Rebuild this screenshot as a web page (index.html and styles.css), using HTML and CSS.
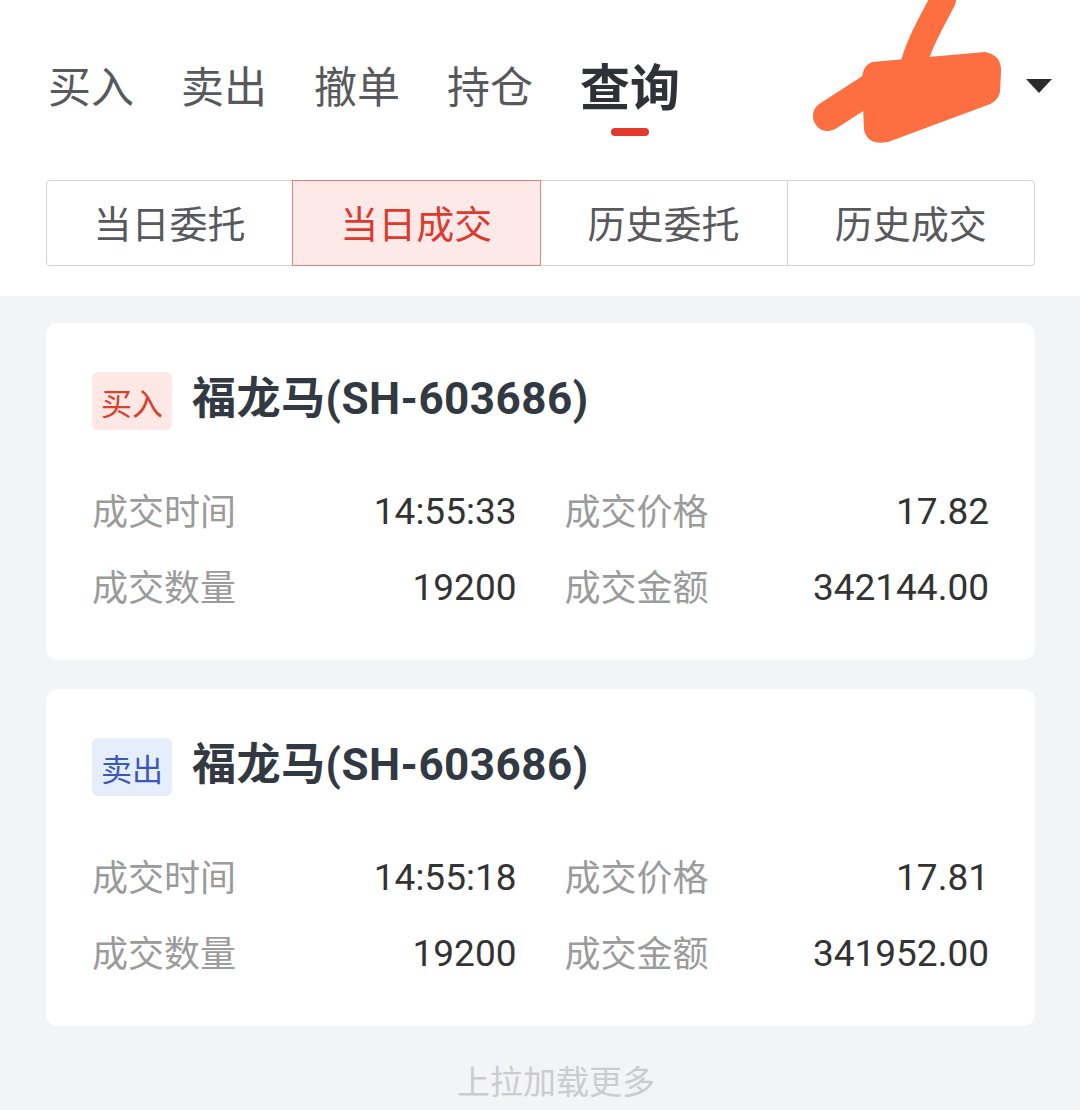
FILE: index.html
```html
<!DOCTYPE html>
<html lang="zh">
<head>
<meta charset="utf-8">
<link rel="stylesheet" href="styles.css">
</head>
<body>
<div class="header">
  <div class="tabs">
    <div class="tab">买入</div>
    <div class="tab">卖出</div>
    <div class="tab">撤单</div>
    <div class="tab">持仓</div>
    <div class="tab active">查询</div>
  </div>
  <div class="account">
    <span class="caret"></span>
    <svg class="scribble" width="280" height="160" viewBox="800 0 280 160">
      <path d="M943 0 C930 25 918 45 912 70" stroke="#fd6f40" stroke-width="26" fill="none" stroke-linecap="round"/>
      <path d="M828 116 L890 76" stroke="#fd6f40" stroke-width="30" fill="none" stroke-linecap="round"/>
      <path d="M872 62 L985 52 Q1002 55 1001 72 L1000 92 Q998 102 985 106 L888 142 Q868 146 864 130 L862 80 Q862 66 872 62 Z" fill="#fd6f40"/>
    </svg>
  </div>
  <div class="segments">
    <div class="seg">当日委托</div>
    <div class="seg on">当日成交</div>
    <div class="seg">历史委托</div>
    <div class="seg">历史成交</div>
  </div>
</div>

<div class="card">
  <div class="card-head">
    <span class="badge buy">买入</span>
    <span class="title">福龙马(SH-603686)</span>
  </div>
  <div class="grid">
    <div class="cell"><span class="lbl">成交时间</span><span class="val">14:55:33</span></div>
    <div class="cell"><span class="lbl">成交价格</span><span class="val">17.82</span></div>
    <div class="cell"><span class="lbl">成交数量</span><span class="val">19200</span></div>
    <div class="cell"><span class="lbl">成交金额</span><span class="val">342144.00</span></div>
  </div>
</div>

<div class="card">
  <div class="card-head">
    <span class="badge sell">卖出</span>
    <span class="title">福龙马(SH-603686)</span>
  </div>
  <div class="grid">
    <div class="cell"><span class="lbl">成交时间</span><span class="val">14:55:18</span></div>
    <div class="cell"><span class="lbl">成交价格</span><span class="val">17.81</span></div>
    <div class="cell"><span class="lbl">成交数量</span><span class="val">19200</span></div>
    <div class="cell"><span class="lbl">成交金额</span><span class="val">341952.00</span></div>
  </div>
</div>

<div class="more">上拉加载更多</div>
</body>
</html>
```

FILE: styles.css
```css
* { box-sizing: border-box; }
html, body {
  margin: 0;
  padding: 0;
}
body {
  width: 1080px;
  height: 1110px;
  overflow: hidden;
  background: #f3f4f6;
  font-family: "Noto Sans CJK SC", "Noto Sans", sans-serif;
  color: #333;
}
.header {
  position: relative;
  background: #fff;
  padding-bottom: 30px;
}
.tabs {
  display: flex;
  align-items: flex-start;
  gap: 47px;
  height: 180px;
  padding: 57px 0 0 48px;
}
.tab {
  display: flex;
  flex-direction: column;
  align-items: center;
  font-size: 43px;
  line-height: 54px;
  color: #58595c;
}
.tab.active {
  font-size: 50px;
  font-weight: 700;
  color: #2e3138;
}
.tab.active::after {
  content: "";
  width: 38px;
  height: 8px;
  margin-top: 17px;
  border-radius: 4px;
  background: #e5392f;
}
.account {
  position: absolute;
  top: 0;
  right: 0;
  width: 280px;
  height: 160px;
}
.caret {
  position: absolute;
  right: 28px;
  top: 79px;
  width: 0;
  height: 0;
  border-left: 13px solid transparent;
  border-right: 13px solid transparent;
  border-top: 14px solid #2b2b2b;
}
.scribble {
  position: absolute;
  left: 0;
  top: 0;
}
.segments {
  display: grid;
  grid-template-columns: repeat(4, 1fr);
  margin: 0 45px 0 46px;
  height: 86px;
}
.seg {
  display: flex;
  align-items: center;
  justify-content: center;
  font-size: 38px;
  color: #58595c;
  border: 1px solid #d4d4d6;
  margin-left: -1px;
  padding-bottom: 3px;
}
.seg:first-child {
  margin-left: 0;
  border-radius: 4px 0 0 4px;
}
.seg:last-child {
  border-radius: 0 4px 4px 0;
}
.seg.on {
  position: relative;
  background: #fdeae8;
  border-color: #ea7f77;
  color: #dc3a2f;
}
.card {
  background: #fff;
  border-radius: 12px;
  margin: 27px 45px 0 46px;
  padding: 49px 46px 35px;
}
.card + .card {
  margin-top: 29px;
}
.card-head {
  display: flex;
  align-items: center;
  gap: 20px;
  height: 58px;
}
.badge {
  display: flex;
  align-items: center;
  justify-content: center;
  width: 80px;
  height: 58px;
  border-radius: 6px;
  font-size: 31px;
}
.badge.buy { background: #fde8e6; color: #d9412f; }
.badge.sell { background: #e6edfb; color: #3a5ab8; }
.title {
  font-family: Roboto, "Noto Sans CJK SC", sans-serif;
  font-size: 44px;
  line-height: 1;
  font-weight: 700;
  color: #333942;
  letter-spacing: 0.5px;
  margin-top: -4px;
}
.grid {
  display: grid;
  grid-template-columns: 1fr 1fr;
  column-gap: 48px;
  margin-top: 43px;
}
.cell {
  display: flex;
  justify-content: space-between;
  align-items: center;
  height: 76px;
}
.lbl {
  font-size: 36px;
  color: #9b9b9b;
  margin-top: -5px;
}
.val {
  font-family: Roboto, sans-serif;
  font-size: 37px;
  color: #333;
}
.more {
  margin-top: 24px;
  padding-left: 32px;
  text-align: center;
  line-height: 60px;
  font-size: 33px;
  color: #cbccd0;
}
```
